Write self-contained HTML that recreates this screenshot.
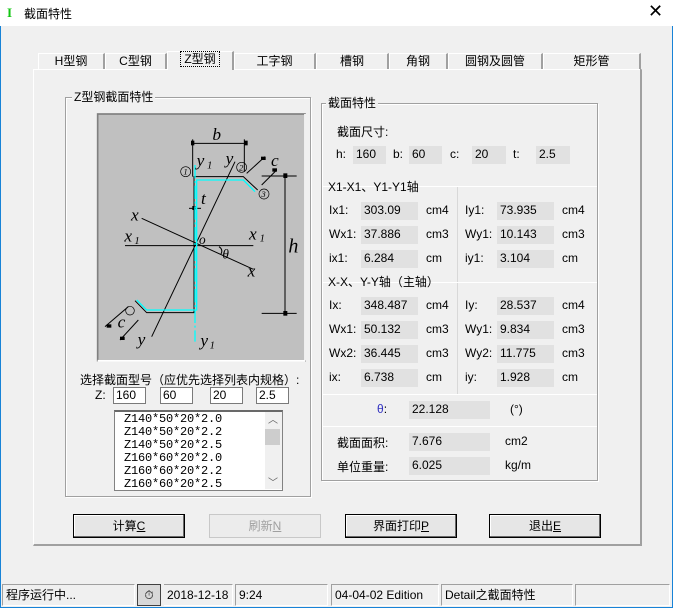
<!DOCTYPE html>
<html><head><meta charset="utf-8"><style>
*{box-sizing:border-box;margin:0;padding:0}
body{width:673px;height:608px;overflow:hidden;background:#f0f0f0;font-family:"Liberation Sans","Noto Sans CJK SC",sans-serif;font-size:12px;color:#000;position:relative}
.a{position:absolute;white-space:nowrap}
.win{position:absolute;left:0;top:0;width:673px;height:608px;border:1px solid #1883d7;border-top:none}
.title{position:absolute;left:0;top:0;width:673px;height:26px;background:#fff}
.tab{position:absolute;top:53px;height:17px;border:1px solid #fff;border-right:2px solid #a0a0a0;border-bottom:none;text-align:center;line-height:15px;font-size:12px;background:#f0f0f0}
.panel{position:absolute;left:33px;top:69px;width:609px;height:477px;border-left:1px solid #fff;border-top:1px solid #fff;border-right:2px solid #a0a0a0;border-bottom:2px solid #a0a0a0}
.grp{position:absolute;border:1px solid #a0a0a0;box-shadow:inset 1px 1px 0 #fff,1px 1px 0 #fff}
.gl{position:absolute;background:#f0f0f0;padding:0 2px;top:-8px;line-height:14px}
.box{position:absolute;background:#e1e1e1;height:18px;line-height:17px;padding-left:3px}
.inp{position:absolute;background:#fff;border:1px solid #7a7a7a;height:17px;line-height:15px;padding-left:2px}
.btn{position:absolute;top:514px;width:112px;height:24px;border:1px solid #000;box-shadow:inset -1px -1px 0 #696969,inset 1px 1px 0 #fff;background:#e6e6e6;text-align:center;line-height:22px}
.sp{position:absolute;top:584px;height:22px;border:1px solid #a0a0a0;border-right-color:#fff;border-bottom-color:#fff;line-height:20px;padding-left:3px}
</style></head><body>
<div class="win"></div>
<div class="title"></div>
<div class="a" style="left:7px;top:5px;color:#11c611;font-weight:bold;font-size:13px;font-family:'Liberation Serif',serif">I</div>
<div class="a" style="left:24px;top:5px;font-size:12px">截面特性</div>
<div class="a" style="left:648px;top:1px;font-size:18px;font-weight:300">✕</div>

<div class="panel"></div>
<div class="tab" style="left:38px;width:67px">H型钢</div>
<div class="tab" style="left:105px;width:62px">C型钢</div>
<div class="tab" style="left:167px;width:67px;top:51px;height:19px;z-index:2"><span style="outline:1px dotted #000;padding:0 3px">Z型钢</span></div>
<div class="tab" style="left:234px;width:82px">工字钢</div>
<div class="tab" style="left:316px;width:73px">槽钢</div>
<div class="tab" style="left:389px;width:59px">角钢</div>
<div class="tab" style="left:448px;width:95px">圆钢及圆管</div>
<div class="tab" style="left:543px;width:98px">矩形管</div>
<div class="a" style="left:33px;top:69px;width:134px;height:1px;background:#fff"></div>
<div class="a" style="left:234px;top:69px;width:406px;height:1px;background:#fff"></div>

<div class="grp" style="left:65px;top:97px;width:246px;height:400px"><div class="gl" style="left:6px">Z型钢截面特性</div></div>

<svg class="a" style="left:95px;top:110px" width="215" height="255" viewBox="0 0 645 765">
<rect x="8" y="12" width="622" height="740" fill="#c0c0c0" stroke="#808080" stroke-width="5"/>
<line x1="8" y1="752" x2="630" y2="752" stroke="#fff" stroke-width="5"/>
<line x1="630" y1="12" x2="630" y2="752" stroke="#fff" stroke-width="5"/>
<g stroke="#000" stroke-width="3" fill="none">
<polyline points="488,240 445,200 297,200 297,608 155,608 120,572"/>
<line x1="90" y1="407" x2="475" y2="407"/>
<line x1="140" y1="325" x2="475" y2="478"/>
<line x1="170" y1="680" x2="420" y2="155"/>
<line x1="293" y1="100" x2="455" y2="100"/>
<line x1="293" y1="88" x2="293" y2="200"/>
<line x1="448" y1="88" x2="448" y2="185"/>
<line x1="570" y1="195" x2="570" y2="615"/>
<line x1="500" y1="198" x2="605" y2="198"/>
<line x1="500" y1="610" x2="605" y2="610"/>
<line x1="455" y1="190" x2="510" y2="140"/>
<line x1="500" y1="225" x2="545" y2="180"/>
<line x1="282" y1="295" x2="318" y2="295"/>
<line x1="30" y1="650" x2="100" y2="590"/>
<line x1="75" y1="690" x2="130" y2="630"/>
<path d="M372,410 Q385,418 378,432"/>
</g>
<g fill="#000"><rect x="288" y="92" width="10" height="14"/><rect x="448" y="92" width="10" height="14"/><rect x="565" y="190" width="12" height="14"/><rect x="565" y="603" width="12" height="14"/><rect x="498" y="140" width="14" height="10"/><rect x="532" y="175" width="14" height="10"/><rect x="35" y="643" width="14" height="10"/><rect x="75" y="680" width="14" height="10"/><rect x="292" y="288" width="10" height="12"/></g>
<g stroke="#00ffff" stroke-width="4" fill="none">
<polyline points="480,245 445,210 305,210 305,600 155,600 125,570"/>
<line x1="300" y1="165" x2="300" y2="695" stroke-dasharray="40,8,6,8"/>
</g>
<g font-family="Liberation Serif,serif" font-style="italic" font-size="52" fill="#000">
<text x="352" y="90">b</text><text x="305" y="168">y</text><text x="336" y="176" font-size="32">1</text>
<text x="392" y="162">y</text><text x="528" y="168">c</text><text x="318" y="282">t</text>
<text x="108" y="332">x</text><text x="88" y="395">x</text><text x="118" y="402" font-size="32">1</text>
<text x="312" y="402" font-size="40">o</text><text x="462" y="388">x</text><text x="494" y="395" font-size="32">1</text>
<text x="382" y="445" font-size="40">θ</text><text x="458" y="500">x</text><text x="580" y="428" font-size="60">h</text>
<text x="68" y="652">c</text><text x="128" y="705">y</text><text x="316" y="708">y</text><text x="344" y="716" font-size="32">1</text>
</g>
<g fill="none" stroke="#000" stroke-width="2">
<circle cx="272" cy="185" r="15"/><circle cx="440" cy="172" r="15"/><circle cx="507" cy="252" r="15"/><circle cx="105" cy="602" r="13"/>
</g>
<g font-family="Liberation Serif,serif" font-style="italic" font-size="26" fill="#000"><text x="265" y="194">1</text><text x="432" y="181">2</text><text x="499" y="261">3</text></g>
</svg>

<div class="a" style="left:80px;top:371px">选择截面型号（应优先选择列表内规格）:</div>
<div class="a" style="left:95px;top:388px">Z:</div>
<div class="inp" style="left:113px;top:387px;width:33px">160</div>
<div class="inp" style="left:160px;top:387px;width:33px">60</div>
<div class="inp" style="left:210px;top:387px;width:33px">20</div>
<div class="inp" style="left:256px;top:387px;width:33px">2.5</div>
<div class="a" style="left:114px;top:410px;width:169px;height:81px;background:#fff;border:1px solid #828282;border-top:2px solid #696969;font-family:'Liberation Mono',monospace;font-size:12px;letter-spacing:-0.2px;line-height:13px;padding:1px 0 0 9px;overflow:hidden">Z140*50*20*2.0<br>Z140*50*20*2.2<br>Z140*50*20*2.5<br>Z160*60*20*2.0<br>Z160*60*20*2.2<br>Z160*60*20*2.5</div>
<div class="a" style="left:265px;top:412px;width:17px;height:77px;background:#f0f0f0"></div>
<div class="a" style="left:265px;top:429px;width:15px;height:16px;background:#cdcdcd"></div>
<div class="a" style="left:268px;top:411px;font-size:10px;color:#606060">︿</div>
<div class="a" style="left:268px;top:474px;font-size:10px;color:#606060">﹀</div>

<div class="grp" style="left:321px;top:103px;width:277px;height:378px"><div class="gl" style="left:4px">截面特性</div></div>
<div class="a" style="left:337px;top:123px">截面尺寸:</div>
<div class="a" style="left:336px;top:147px">h:</div><div class="box" style="left:353px;top:146px;width:33px">160</div>
<div class="a" style="left:393px;top:147px">b:</div><div class="box" style="left:409px;top:146px;width:33px">60</div>
<div class="a" style="left:450px;top:147px">c:</div><div class="box" style="left:472px;top:146px;width:34px">20</div>
<div class="a" style="left:513px;top:147px">t:</div><div class="box" style="left:536px;top:146px;width:34px">2.5</div>
<div class="a" style="left:322px;top:186px;width:275px;height:1px;background:#fff"></div>
<div class="a" style="left:457px;top:187px;width:1px;height:207px;background:#d8d8d8"></div>
<div class="a" style="left:328px;top:178px">X1-X1、Y1-Y1轴</div>
<div class="a" style="left:329px;top:203px">Ix1:</div><div class="box" style="left:361px;top:202px;width:57px">303.09</div><div class="a" style="left:426px;top:203px">cm4</div>
<div class="a" style="left:465px;top:203px">Iy1:</div><div class="box" style="left:497px;top:202px;width:57px">73.935</div><div class="a" style="left:562px;top:203px">cm4</div>
<div class="a" style="left:329px;top:227px">Wx1:</div><div class="box" style="left:361px;top:226px;width:57px">37.886</div><div class="a" style="left:426px;top:227px">cm3</div>
<div class="a" style="left:465px;top:227px">Wy1:</div><div class="box" style="left:497px;top:226px;width:57px">10.143</div><div class="a" style="left:562px;top:227px">cm3</div>
<div class="a" style="left:329px;top:251px">ix1:</div><div class="box" style="left:361px;top:250px;width:57px">6.284</div><div class="a" style="left:426px;top:251px">cm</div>
<div class="a" style="left:465px;top:251px">iy1:</div><div class="box" style="left:497px;top:250px;width:57px">3.104</div><div class="a" style="left:562px;top:251px">cm</div>
<div class="a" style="left:322px;top:282px;width:275px;height:1px;background:#fff"></div>
<div class="a" style="left:328px;top:273px">X-X、Y-Y轴（主轴）</div>
<div class="a" style="left:329px;top:298px">Ix:</div><div class="box" style="left:361px;top:297px;width:57px">348.487</div><div class="a" style="left:426px;top:298px">cm4</div>
<div class="a" style="left:465px;top:298px">Iy:</div><div class="box" style="left:497px;top:297px;width:57px">28.537</div><div class="a" style="left:562px;top:298px">cm4</div>
<div class="a" style="left:329px;top:322px">Wx1:</div><div class="box" style="left:361px;top:321px;width:57px">50.132</div><div class="a" style="left:426px;top:322px">cm3</div>
<div class="a" style="left:465px;top:322px">Wy1:</div><div class="box" style="left:497px;top:321px;width:57px">9.834</div><div class="a" style="left:562px;top:322px">cm3</div>
<div class="a" style="left:329px;top:346px">Wx2:</div><div class="box" style="left:361px;top:345px;width:57px">36.445</div><div class="a" style="left:426px;top:346px">cm3</div>
<div class="a" style="left:465px;top:346px">Wy2:</div><div class="box" style="left:497px;top:345px;width:57px">11.775</div><div class="a" style="left:562px;top:346px">cm3</div>
<div class="a" style="left:329px;top:370px">ix:</div><div class="box" style="left:361px;top:369px;width:57px">6.738</div><div class="a" style="left:426px;top:370px">cm</div>
<div class="a" style="left:465px;top:370px">iy:</div><div class="box" style="left:497px;top:369px;width:57px">1.928</div><div class="a" style="left:562px;top:370px">cm</div>
<div class="a" style="left:322px;top:394px;width:275px;height:1px;background:#fff"></div>
<div class="a" style="left:377px;top:402px"><span style="color:#3030c0">θ</span>:</div><div class="box" style="left:409px;top:401px;width:81px">22.128</div><div class="a" style="left:510px;top:402px">(°)</div>
<div class="a" style="left:322px;top:426px;width:275px;height:1px;background:#fff"></div>
<div class="a" style="left:337px;top:434px">截面面积:</div><div class="box" style="left:409px;top:433px;width:81px">7.676</div><div class="a" style="left:505px;top:434px">cm2</div>
<div class="a" style="left:337px;top:458px">单位重量:</div><div class="box" style="left:409px;top:457px;width:81px">6.025</div><div class="a" style="left:505px;top:458px">kg/m</div>

<div class="btn" style="left:73px">计算<u>C</u></div>
<div class="btn" style="left:209px;color:#a0a0a0;border-color:#c8c8c8;box-shadow:none;background:#ececec">刷新<u>N</u></div>
<div class="btn" style="left:345px">界面打印<u>P</u></div>
<div class="btn" style="left:489px">退出<u>E</u></div>

<div class="sp" style="left:2px;width:133px">程序运行中...</div>
<div class="sp" style="left:137px;width:24px;background:#d8d8d8;border:1px solid #404040;padding:0;text-align:center">⏱</div>
<div class="sp" style="left:164px;width:69px;border-left:none">2018-12-18</div>
<div class="sp" style="left:235px;width:93px">9:24</div>
<div class="sp" style="left:331px;width:108px">04-04-02 Edition</div>
<div class="sp" style="left:441px;width:132px">Detail之截面特性</div>
<div class="sp" style="left:575px;width:95px"></div>
</body></html>
